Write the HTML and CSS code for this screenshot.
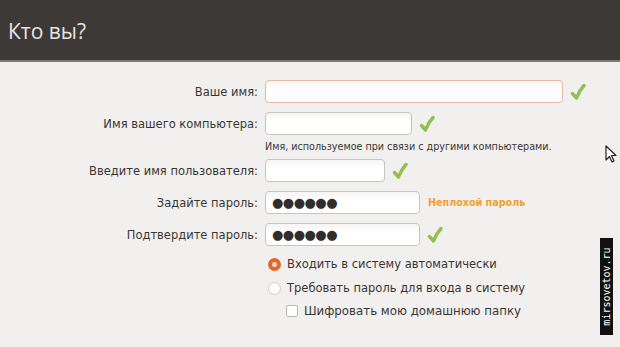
FILE: index.html
```html
<!DOCTYPE html>
<html>
<head>
    <meta charset="utf-8">
    <title>Кто вы?</title>
    <link rel="stylesheet" href="styles.css">
</head>
<body>
    <div class="header">
        <h1 class="title">Кто вы?</h1>
    </div>
    <div class="form">
        <div class="row">
            <label class="label">Ваше имя:</label>
            <div class="input input-wide input-active"></div>
            <svg class="check" viewBox="0 0 16 18"><path d="M2.5 10.5 L6.5 15 Q9 8 14 2.5"/></svg>
        </div>
        <div class="row">
            <label class="label">Имя вашего компьютера:</label>
            <div class="input input-mid"></div>
            <svg class="check" viewBox="0 0 16 18"><path d="M2.5 10.5 L6.5 15 Q9 8 14 2.5"/></svg>
        </div>
        <div class="hint">Имя, используемое при связи с другими компьютерами.</div>
        <div class="row">
            <label class="label">Введите имя пользователя:</label>
            <div class="input input-short"></div>
            <svg class="check" viewBox="0 0 16 18"><path d="M2.5 10.5 L6.5 15 Q9 8 14 2.5"/></svg>
        </div>
        <div class="row">
            <label class="label">Задайте пароль:</label>
            <div class="input input-pass"><span class="dots">●●●●●●</span></div>
            <span class="strength">Неплохой пароль</span>
        </div>
        <div class="row">
            <label class="label">Подтвердите пароль:</label>
            <div class="input input-pass"><span class="dots">●●●●●●</span></div>
            <svg class="check" viewBox="0 0 16 18"><path d="M2.5 10.5 L6.5 15 Q9 8 14 2.5"/></svg>
        </div>
        <div class="options">
            <div class="option">
                <span class="radio radio-on"></span>
                <span>Входить в систему автоматически</span>
            </div>
            <div class="option">
                <span class="radio"></span>
                <span>Требовать пароль для входа в систему</span>
            </div>
            <div class="option option-sub">
                <span class="checkbox"></span>
                <span>Шифровать мою домашнюю папку</span>
            </div>
        </div>
    </div>

    <svg class="cursor" viewBox="0 0 12 18"><path d="M1 1 L1 15 L4.5 11.5 L7 17 L9 16 L6.5 10.5 L11 10.5 Z"/></svg>
    <div class="watermark"><span>mirsovetov.ru</span></div>
</body>
</html>
```

FILE: styles.css
```css
body {
    margin: 0;
    background-color: #f2f0ee;
    font-family: "DejaVu Sans", sans-serif;
    color: #383634;
    height: 347px;
    overflow: hidden;
    position: relative;
}
.header {
    height: 60px;
    background-color: #3c3937;
    border-bottom: 2px solid #7d7975;
    display: flex;
    align-items: center;
}
.title {
    margin: 0 0 0 8px;
    font-family: "Open Sans", sans-serif;
    font-weight: normal;
    font-size: 21px;
    color: #e6e4e2;
    padding-top: 2px;
}
.form {
    padding-top: 18px;
}
.row {
    display: flex;
    align-items: center;
    height: 23px;
    margin-bottom: 9px;
}
.label {
    width: 265px;
    padding-right: 7px;
    box-sizing: border-box;
    text-align: right;
    font-size: 11.5px;
}
.input {
    height: 23px;
    box-sizing: border-box;
    border: 1px solid #c8c5c1;
    border-radius: 4px;
    background: linear-gradient(#f6f5f4, #ffffff 40%);
    display: flex;
    align-items: center;
    padding-left: 6px;
}
.input-wide { width: 298px; }
.input-mid { width: 147px; }
.input-short { width: 120px; }
.input-pass { width: 155px; }
.input-active {
    border: 1.5px solid #e7b9a5;
}
.dots {
    font-size: 13px;
    letter-spacing: -0.5px;
    color: #2f2e2d;
}
.check {
    width: 16px;
    height: 18px;
    margin-left: 7px;
}
.check path {
    fill: none;
    stroke: #92bf50;
    stroke-width: 3.4;
    stroke-linecap: round;
    stroke-linejoin: round;
}
.strength {
    margin-left: 8px;
    font-size: 9.6px;
    font-weight: bold;
    color: #f0a030;
}
.hint {
    margin: -9px 0 0 265px;
    height: 24px;
    line-height: 24px;
    font-size: 9.6px;
}
.options {
    margin-top: -3px;
    padding-left: 268px;
}
.option {
    display: flex;
    align-items: center;
    gap: 6px;
    height: 24px;
    font-size: 11.5px;
}
.option-sub {
    padding-left: 18px;
    margin-top: -1px;
    font-size: 11.8px;
}
.radio {
    width: 13px;
    height: 13px;
    border-radius: 50%;
    box-sizing: border-box;
    border: 1px solid #d0ccc8;
    background: #ffffff;
}
.radio-on {
    border: 4px solid #e2672d;
    background: #f7d9c7;
}
.checkbox {
    width: 12px;
    height: 12px;
    box-sizing: border-box;
    border: 1px solid #b9b5b1;
    border-radius: 2px;
    background: #ffffff;
}
.cursor {
    position: absolute;
    left: 605px;
    top: 145px;
    width: 12px;
    height: 18px;
}
.cursor path {
    fill: #ffffff;
    stroke: #222222;
    stroke-width: 1.2;
    stroke-linejoin: round;
}
.watermark {
    position: absolute;
    left: 600px;
    top: 238px;
    width: 13px;
    height: 97px;
    background: #111111;
    display: flex;
    align-items: center;
    justify-content: center;
}
.watermark span {
    transform: rotate(-90deg);
    white-space: nowrap;
    font-family: "DejaVu Sans Mono", monospace;
    font-size: 10px;
    color: #ffffff;
}
```
